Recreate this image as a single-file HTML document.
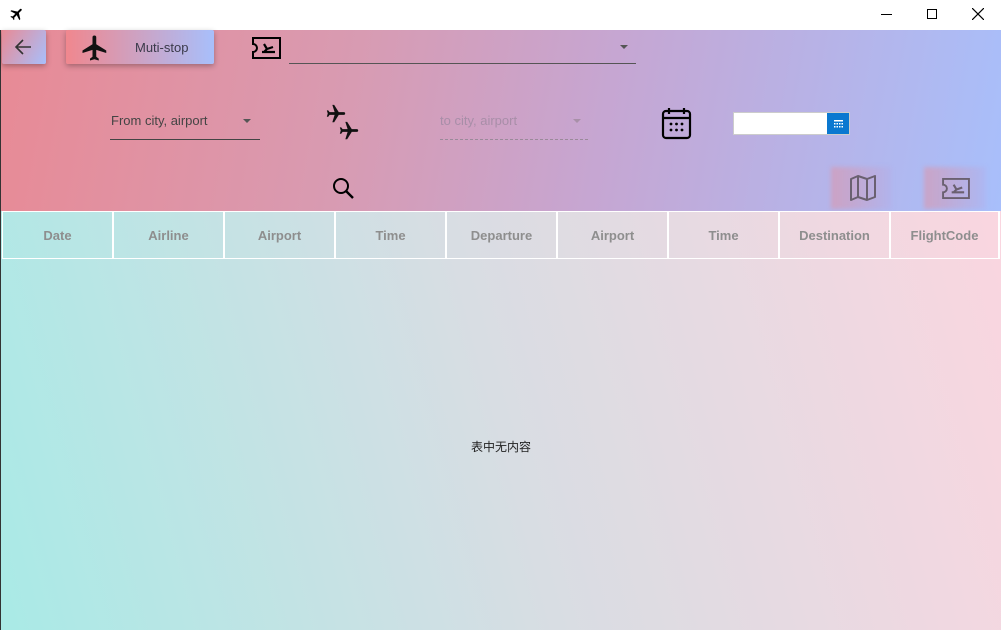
<!DOCTYPE html>
<html><head><meta charset="utf-8"><style>
*{margin:0;padding:0;box-sizing:border-box}
body{width:1001px;height:630px;overflow:hidden;font-family:"Liberation Sans","Noto Sans CJK SC",sans-serif;background:#fff;position:relative}
.title{position:absolute;left:0;top:0;width:1001px;height:30px;background:#fff}
.top{position:absolute;left:0;top:30px;width:1001px;height:181px;background:linear-gradient(100deg,#e88a95 0%,#d89bb2 35%,#c6a6d2 60%,#a8bffb 100%);border-left:1px solid #333}
.bottom{position:absolute;left:0;top:211px;width:1001px;height:419px;background:linear-gradient(75deg,#a9eae6 0%,#d8dde3 50%,#fad6e0 100%);border-left:1px solid #333}
.abs{position:absolute}
.th{position:absolute;top:211px;height:48px;border:1px solid #fff;border-right:2px solid #fff;color:#8e8e8e;font-weight:bold;font-size:13px;display:flex;align-items:center;justify-content:center}
.shadowbtn{box-shadow:0 2px 6px rgba(0,0,0,.3);border-radius:2px}
</style></head><body>
<div class="title">
<svg class="abs" style="left:9px;top:6px" width="16" height="16" viewBox="0 0 24 24"><path d="M21 16v-2l-8-5V3.5a1.5 1.5 0 0 0-3 0V9l-8 5v2l8-2.5V19l-2 1.5V22l3.5-1 3.5 1v-1.5L13 19v-5.5z" fill="#000" transform="rotate(45 12 12)"/></svg>
<div class="abs" style="left:881px;top:14px;width:11px;height:1px;background:#000"></div>
<div class="abs" style="left:927px;top:9px;width:10px;height:10px;border:1px solid #000"></div>
<svg class="abs" style="left:972px;top:8px" width="12" height="12"><path d="M0 0L12 12M12 0L0 12" stroke="#000" stroke-width="1.2"/></svg>
</div>
<div class="top"></div>
<div class="bottom"></div>
<div class="abs shadowbtn" style="left:2px;top:30px;width:44px;height:34px;background:linear-gradient(120deg,#e88a95,#a8bffb)"></div>
<svg class="abs" style="left:13px;top:38px" width="20" height="18" viewBox="0 0 20 18"><path d="M18 9H3M10 2L3 9l7 7" stroke="#333" stroke-width="1.6" fill="none"/></svg>
<div class="abs shadowbtn" style="left:66px;top:30px;width:148px;height:34px;background:linear-gradient(90deg,#f0878e,#a8bffb)"></div>
<svg class="abs" style="left:80px;top:33px" width="30" height="30" viewBox="0 0 24 24"><path d="M21 16v-2l-8-5V3.5a1.5 1.5 0 0 0-3 0V9l-8 5v2l8-2.5V19l-2 1.5V22l3.5-1 3.5 1v-1.5L13 19v-5.5z" fill="#111"/></svg>
<div class="abs" style="left:135px;top:40px;font-size:13px;color:#3a3a4a">Muti-stop</div>
<svg class="abs" style="left:251px;top:36px" width="31" height="24" viewBox="0 0 31 24"><path d="M2 2h27v20H2v-6a4 4 0 0 0 0-8z" stroke="#000" stroke-width="2" fill="none"/><path d="M11 16h13M13 8l3 5-3 3M16 13l6-2" stroke="#000" stroke-width="2.2" fill="none"/></svg>
<div class="abs" style="left:289px;top:63px;width:347px;height:1px;background:#555"></div>
<div class="abs" style="left:620px;top:45px;border:4px solid transparent;border-top:4px solid #555;border-bottom:0"></div>
<div class="abs" style="left:111px;top:113px;font-size:13px;color:#444">From city, airport</div>
<div class="abs" style="left:243px;top:119px;border:4px solid transparent;border-top:4px solid #555;border-bottom:0"></div>
<div class="abs" style="left:110px;top:139px;width:150px;height:1px;background:#444"></div>
<svg class="abs" style="left:325px;top:103px" width="22" height="22" viewBox="0 0 24 24"><path d="M21 16v-2l-8-5V3.5a1.5 1.5 0 0 0-3 0V9l-8 5v2l8-2.5V19l-2 1.5V22l3.5-1 3.5 1v-1.5L13 19v-5.5z" fill="#111" transform="rotate(90 12 12)"/></svg>
<svg class="abs" style="left:338px;top:120px" width="22" height="22" viewBox="0 0 24 24"><path d="M21 16v-2l-8-5V3.5a1.5 1.5 0 0 0-3 0V9l-8 5v2l8-2.5V19l-2 1.5V22l3.5-1 3.5 1v-1.5L13 19v-5.5z" fill="#111" transform="rotate(90 12 12)"/></svg>
<div class="abs" style="left:440px;top:113px;font-size:13px;color:#a88ea8">to city, airport</div>
<div class="abs" style="left:573px;top:119px;border:4px solid transparent;border-top:4px solid #a890a8;border-bottom:0"></div>
<div class="abs" style="left:440px;top:139px;width:148px;border-top:1px dashed #9a8a9a"></div>
<svg class="abs" style="left:661px;top:107px" width="31" height="33" viewBox="0 0 31 33"><rect x="2" y="4" width="27" height="27" rx="3" stroke="#000" stroke-width="2.2" fill="none"/><path d="M2 11h27M8 1v6M23 1v6" stroke="#000" stroke-width="2.2"/><g fill="#000"><circle cx="10" cy="17" r="1.4"/><circle cx="15.5" cy="17" r="1.4"/><circle cx="21" cy="17" r="1.4"/><circle cx="10" cy="23" r="1.4"/><circle cx="15.5" cy="23" r="1.4"/><circle cx="21" cy="23" r="1.4"/></g></svg>
<div class="abs" style="left:733px;top:112px;width:117px;height:23px;background:#fff;border:1px solid #ccc"></div>
<div class="abs" style="left:827px;top:113px;width:22px;height:21px;background:#0a78d0"></div>
<svg class="abs" style="left:834px;top:120px" width="9" height="8"><g fill="#fff"><rect x="0" y="0" width="9" height="1.5"/><rect x="0" y="3" width="1.5" height="1.5"/><rect x="2.5" y="3" width="1.5" height="1.5"/><rect x="5" y="3" width="1.5" height="1.5"/><rect x="7.5" y="3" width="1.5" height="1.5"/><rect x="0" y="6" width="1.5" height="1.5"/><rect x="2.5" y="6" width="1.5" height="1.5"/><rect x="5" y="6" width="1.5" height="1.5"/><rect x="7.5" y="6" width="1.5" height="1.5"/></g></svg>
<svg class="abs" style="left:331px;top:176px" width="26" height="26" viewBox="0 0 26 26"><circle cx="10" cy="10" r="7" stroke="#000" stroke-width="2" fill="none"/><path d="M15 15l7 7" stroke="#000" stroke-width="2.4"/></svg>
<div class="abs" style="left:831px;top:167px;width:61px;height:42px;background:linear-gradient(90deg,rgba(220,150,170,.6),rgba(180,170,230,.3));filter:blur(2px)"></div>
<svg class="abs" style="left:849px;top:175px" width="28" height="26" viewBox="0 0 28 26"><path d="M2 4l7-3 9 3 8-3v21l-8 3-9-3-7 3zM9 1v21M18 4v21" stroke="#6a6070" stroke-width="2" fill="none" stroke-linejoin="round"/></svg>
<div class="abs" style="left:924px;top:167px;width:62px;height:42px;background:linear-gradient(90deg,rgba(220,150,170,.6),rgba(180,170,230,.3));filter:blur(2px)"></div>
<svg class="abs" style="left:941px;top:177px" width="30" height="23" viewBox="0 0 31 24"><path d="M2 2h27v20H2v-6a4 4 0 0 0 0-8z" stroke="#6a6070" stroke-width="2" fill="none"/><path d="M11 16h13M13 8l3 5-3 3M16 13l6-2" stroke="#6a6070" stroke-width="2.2" fill="none"/></svg>
<div class="th" style="left:2px;width:112px">Date</div>
<div class="th" style="left:113px;width:112px">Airline</div>
<div class="th" style="left:224px;width:112px">Airport</div>
<div class="th" style="left:335px;width:112px">Time</div>
<div class="th" style="left:446px;width:112px">Departure</div>
<div class="th" style="left:557px;width:112px">Airport</div>
<div class="th" style="left:668px;width:112px">Time</div>
<div class="th" style="left:779px;width:112px">Destination</div>
<div class="th" style="left:890px;width:110px">FlightCode</div>
<div class="abs" style="left:471px;top:438px;font-size:12px;color:#222">表中无内容</div>
</body></html>
